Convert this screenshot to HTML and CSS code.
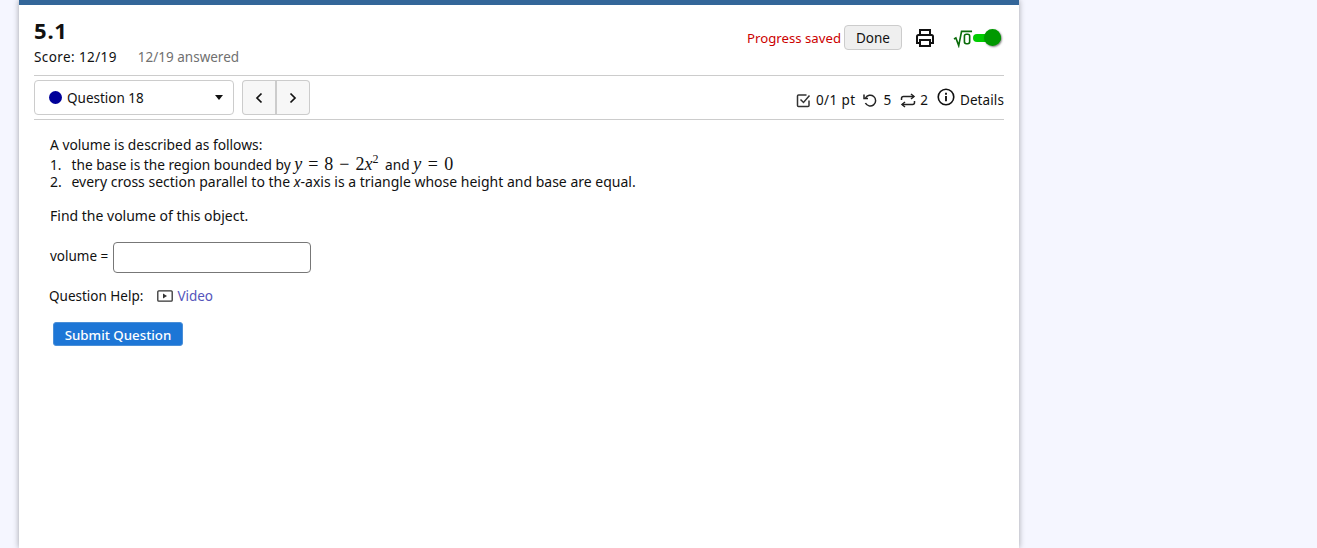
FILE: index.html
```html
<!DOCTYPE html>
<html lang="en">
<head>
  <meta charset="UTF-8" />
  <title>5.1</title>
  <link rel="stylesheet" href="styles.css">
</head>
<body>
  <div class="page">
    <header class="hw-header">
      <div class="hw-title">
        <h1>5.1</h1>
        <div class="hw-score">
          <span class="hw-points">Score: 12/19</span>
          <span class="hw-answered">12/19 answered</span>
        </div>
      </div>
      <div class="hw-tools">
        <span class="saved">Progress saved</span>
        <button class="btn-done">Done</button>
        <svg class="icon-print" width="20" height="20" viewBox="0 0 20 20" fill="none" stroke="#111" stroke-width="2">
          <path d="M5 7V2h10v5" />
          <path d="M5 15H2V8.500Q2 7 3.500 7h13Q18 7 18 8.500V15h-3" />
          <rect x="5" y="12" width="10" height="6" />
        </svg>
        <span class="math-toggle">
          <svg width="20" height="20" viewBox="0 0 21 20" fill="none" stroke="#0a6b0a" stroke-width="1.700">
            <path d="M1 11l2-1 3 8 3-15h11" />
            <rect x="12" y="6" width="5.500" height="10" rx="2" />
          </svg>
          <span class="switch"><span class="knob"></span></span>
        </span>
      </div>
    </header>

    <div class="question-bar">
      <div class="question-left">
        <div class="question-select">
          <span class="dot"></span>
          <span class="question-name">Question 18</span>
          <span class="caret"></span>
        </div>
        <div class="pager">
          <button class="pager-btn">
            <svg width="8" height="12" viewBox="0 0 8 12" fill="none" stroke="#111" stroke-width="1.700"><path d="M6.500 1.500L2 6l4.500 4.500" /></svg>
          </button>
          <button class="pager-btn">
            <svg width="8" height="12" viewBox="0 0 8 12" fill="none" stroke="#111" stroke-width="1.700"><path d="M1.500 1.500L6 6l-4.500 4.500" /></svg>
          </button>
        </div>
      </div>
      <div class="question-meta">
        <span class="meta-item meta-score">
          <svg width="15" height="15" viewBox="0 0 15 15" fill="none" stroke="#333" stroke-width="1.500">
            <path d="M13 7.500V12.500q0 1-1 1H2.500q-1 0-1-1V3q0-1 1-1h8" />
            <path d="M4.500 6.500l3 3L13.500 2.500" />
          </svg>
          0/1 pt
        </span>
        <span class="meta-item meta-retries">
          <svg width="16" height="15" viewBox="0 0 16 15" fill="none" stroke="#222" stroke-width="1.500">
            <path d="M3.500 5A5.400 5.400 0 1 1 3.400 10" />
            <path d="M2 1.500V5.600H6" />
          </svg>
          5
        </span>
        <span class="meta-item meta-tries">
          <svg width="16" height="15" viewBox="0 0 16 15" fill="none" stroke="#222" stroke-width="1.500">
            <path d="M1.500 7V5.500Q1.500 3.500 3.500 3.500H14" />
            <path d="M11 1l3 2.500-3 2.500" />
            <path d="M14.500 8V9.500Q14.500 11.500 12.500 11.500H2" />
            <path d="M5 9l-3 2.500 3 2.500" />
          </svg>
          2
        </span>
        <span class="meta-item details">
          <svg class="icon-info" width="18" height="18" viewBox="0 0 19 19" fill="none" stroke="#111" stroke-width="1.700">
            <circle cx="9.500" cy="9.500" r="8.200" />
            <path d="M9.500 8.500V14" stroke-width="2" />
            <path d="M9.500 5V7" stroke-width="2" />
          </svg>
          Details
        </span>
      </div>
    </div>

    <main class="question-body">
      <p class="line line-intro">A volume is described as follows:</p>
      <p class="line line-math"><span class="num">1.</span>the base is the region bounded by <span class="math"><i>y</i> = 8 − 2<i>x</i><sup>2</sup></span> and <span class="math math-end"><i>y</i> = 0</span></p>
      <p class="line"><span class="num">2.</span>every cross section parallel to the <i>x</i>-axis is a triangle whose height and base are equal.</p>
      <p class="line find">Find the volume of this object.</p>
      <div class="answer-row">
        <label for="volume">volume =</label>
        <input id="volume" class="answer-input" type="text">
      </div>
      <div class="help-row">
        <span class="help-label">Question Help:</span>
        <svg width="16" height="12" viewBox="0 0 16 12" fill="none" stroke="#333" stroke-width="1.300">
          <rect x="0.800" y="0.800" width="14.400" height="10.400" rx="1" />
          <path d="M6 3.500v5l4-2.500z" fill="#333" stroke="none" />
        </svg>
        <a class="help-link" href="#">Video</a>
      </div>
      <button class="btn-submit">Submit Question</button>
    </main>
  </div>
</body>
</html>
```

FILE: styles.css
```css
* {
  box-sizing: border-box;
}

html, body {
  height: 100%;
}

body {
  margin: 0;
  background: #f5f6ff;
  color: #111;
  font-family: 'Noto Sans', sans-serif;
  font-size: 13.5px;
  overflow: hidden;
}

.page {
  width: 1000px;
  height: 100%;
  margin-left: 19px;
  padding: 0 15px;
  background: #fff;
  border-top: 5px solid #336699;
  box-shadow: 0 0 6px rgba(0, 0, 0, 0.35);
}

.hw-header {
  display: flex;
  justify-content: space-between;
  height: 71px;
  border-bottom: 1px solid #ccc;
}

.hw-title h1 {
  margin: 11px 0 0;
  font-size: 22px;
  line-height: 28px;
  font-weight: 700;
  letter-spacing: 0.8px;
}

.hw-score {
  display: flex;
  gap: 21px;
  margin-top: 4px;
}

.hw-points {
  letter-spacing: 0.4px;
}

.hw-answered {
  color: #707070;
}

.hw-tools {
  display: flex;
  align-items: center;
  height: 55px;
  padding: 9px 3px 0 0;
}

.saved {
  color: #c00;
  margin: 1px 3px 0 0;
  font-size: 13.2px;
}

.btn-done {
  width: 58px;
  height: 25px;
  padding: 1px 0 0;
  background: #efefef;
  border: 1px solid #ccc;
  border-radius: 4px;
  color: #111;
  font: inherit;
}

.icon-print {
  margin: 1px 0 0 13px;
}

.math-toggle {
  display: flex;
  align-items: center;
  margin: 1px 0 0 18px;
}

.switch {
  position: relative;
  display: block;
  width: 28px;
  height: 8px;
  background: #0c0;
  border-radius: 4px;
}

.knob {
  position: absolute;
  top: -5px;
  right: 0;
  width: 17px;
  height: 17px;
  background: #090;
  border-radius: 50%;
  box-shadow: 1px 1px 2px rgba(0, 0, 0, 0.5);
}

.question-bar {
  display: flex;
  justify-content: space-between;
  height: 44px;
  border-bottom: 1px solid #ccc;
}

.question-left {
  display: flex;
  gap: 8px;
  padding-top: 4px;
}

.question-select {
  display: flex;
  align-items: center;
  width: 200px;
  height: 35px;
  padding: 0 10px 0 14px;
  border: 1px solid #ccc;
  border-radius: 4px;
}

.dot {
  width: 13px;
  height: 13px;
  margin-right: 5px;
  background: #000099;
  border-radius: 50%;
}

.question-name {
  flex: 1;
}

.caret {
  width: 0;
  height: 0;
  border-left: 4px solid transparent;
  border-right: 4px solid transparent;
  border-top: 5px solid #111;
}

.pager {
  display: flex;
}

.pager-btn {
  display: flex;
  align-items: center;
  justify-content: center;
  width: 33px;
  height: 35px;
  padding: 0;
  background: #f7f7f7;
  border: 1px solid #ccc;
}

.pager-btn:first-child {
  width: 35px;
  border-radius: 4px 0 0 4px;
  border-right-width: 2px;
}

.pager-btn:last-child {
  border-left: 0;
  border-radius: 0 4px 4px 0;
}

.question-meta {
  display: flex;
  align-items: flex-end;
  gap: 7px;
  padding-bottom: 10px;
}

.meta-item {
  display: flex;
  align-items: center;
  gap: 4px;
}

.meta-score {
  gap: 5px;
  letter-spacing: 0.4px;
}

.meta-retries {
  gap: 5px;
}

.meta-tries {
  margin-left: 2px;
}

.details {
  align-items: flex-end;
  gap: 5px;
  margin-left: 2px;
  letter-spacing: 0.1px;
}

.icon-info {
  margin-bottom: 3px;
}

.question-body {
  padding: 16px 16px 0;
  font-size: 14px;
}

.line {
  margin: 0;
  line-height: 18px;
}

.line-intro {
  font-size: 13.8px;
}

.line-math {
  height: 19px;
  line-height: 20px;
  font-size: 13.7px;
}

.num {
  display: inline-block;
  width: 21.5px;
}

.math {
  font-family: 'Liberation Serif', serif;
  font-size: 18px;
  word-spacing: 1.5px;
}

.math sup {
  margin-right: 3px;
  font-size: 12px;
  line-height: 0;
}

.math-end {
  word-spacing: 2px;
}

.find {
  margin-top: 16px;
}

.answer-row {
  display: flex;
  align-items: center;
  gap: 5px;
  margin-top: 17px;
  font-size: 13.5px;
}

.answer-row label {
  margin-bottom: 3px;
}

.answer-input {
  width: 198px;
  height: 31px;
  border: 1px solid #777;
  border-radius: 4px;
}

.help-row {
  display: flex;
  align-items: center;
  margin: 14px 0 0 -1px;
  font-size: 13.5px;
  line-height: 18px;
}

.help-label {
  margin-right: 14px;
}

.help-link {
  margin-left: 4px;
  color: #5555bb;
  text-decoration: none;
}

.btn-submit {
  display: block;
  width: 130px;
  height: 24px;
  margin: 17px 0 0 3px;
  padding: 2px 0 0;
  background: #1d76d6;
  border: 1px solid #4a8fd8;
  border-radius: 3px;
  color: #fff;
  font: inherit;
  font-size: 13.3px;
  font-weight: 500;
}
```
